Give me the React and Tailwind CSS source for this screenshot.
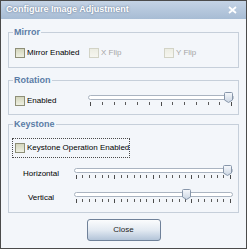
import React from 'react';

const font = { fontFamily: '"Liberation Sans", Arial, sans-serif' };

const CheckBox = ({ disabled }) => (
    <span
        className={
            disabled
                ? 'block w-[10px] h-[10px] shrink-0 border border-[#d2d3c6] bg-gradient-to-b from-[#ecede3] to-[#f6f6f0]'
                : 'block w-[10px] h-[10px] shrink-0 border border-[#8e8f78] bg-gradient-to-b from-[#d4d6bd] to-[#eef0e2]'
        }
    />
);

const CheckLabel = ({ text, disabled }) => (
    <div className="flex items-center gap-[2px] whitespace-nowrap">
        <CheckBox disabled={disabled} />
        <span className={disabled ? 'text-[8px] leading-[10px] text-[#a6a6a6]' : 'text-[8px] leading-[10px] text-black'}>
            {text}
        </span>
    </div>
);

const Thumb = () => (
    <svg width="9" height="11" viewBox="0 0 9 11" className="block">
        <defs>
            <linearGradient id="thumbFill" x1="0" y1="0" x2="0" y2="1">
                <stop offset="0" stopColor="#f7f9fc" />
                <stop offset="1" stopColor="#c9d4e2" />
            </linearGradient>
        </defs>
        <path d="M1.5 0.5h6a1 1 0 0 1 1 1v6.5l-4 2.5-4-2.5v-6.5a1 1 0 0 1 1-1z" fill="url(#thumbFill)" stroke="#8796aa" />
    </svg>
);

// track + thumb + tick row
const Slider = ({ className, value, ticks }) => {
    const list = Array.from({ length: ticks }, (_, i) => i);
    return (
        <div className={`flex flex-col ${className}`}>
            <div className="relative h-[5px] rounded-[3px] border border-[#aab4c1] bg-white">
                <div className="absolute top-[-4px]" style={{ left: `calc(${value}% - ${value * 0.09}px)` }}>
                    <Thumb />
                </div>
            </div>
            <div className="flex items-start justify-between px-[2px] mt-[2px]">
                {list.map(i => (
                    <span
                        key={i}
                        className={i % 6 === 0 || i === ticks - 1 ? 'block w-px h-[4px] bg-[#4a4a4a]' : 'block w-px h-[3px] bg-[#5a5a5a]'}
                    />
                ))}
            </div>
        </div>
    );
};

const Group = ({ title, children, className }) => (
    <fieldset className={`border border-[#c6cfda] ${className || ''}`}>
        <legend className="ml-[4px] px-[1px] text-[9px] leading-[10px] font-bold text-[#5b7ca6]">{title}</legend>
        {children}
    </fieldset>
);

export default function App() {
    return (
        <div style={font} className="w-[247px] h-[249px] flex flex-col border border-[#4b4b4b] bg-[#f3f6fa] overflow-hidden">
            {/* Title bar */}
            <div className="h-[18px] shrink-0 flex items-center justify-between pl-[5px] pr-[9px] bg-gradient-to-b from-[#c4d3e5] to-[#a7bcd4]">
                <span className="text-[9px] font-bold text-white [text-shadow:0_0_2px_rgba(60,80,110,0.8)]">
                    Configure Image Adjustment
                </span>
                <svg width="9" height="8" viewBox="0 0 9 8">
                    <path d="M1 1l7 6M8 1l-7 6" stroke="#ffffff" strokeWidth="1.8" />
                </svg>
            </div>

            <div className="flex flex-col px-[7px] pt-[8px]">
                <Group title="Mirror" className="pt-0 pb-[9px]">
                    <div className="flex items-center pl-[6px] pt-[11px]">
                        <div className="w-[74px]">
                            <CheckLabel text="Mirror Enabled" />
                        </div>
                        <div className="w-[75px]">
                            <CheckLabel text="X Flip" disabled />
                        </div>
                        <CheckLabel text="Y Flip" disabled />
                    </div>
                </Group>

                <Group title="Rotation" className="mt-[7px] pb-[8px]">
                    <div className="flex items-start pl-[6px] pr-[4px] pt-[10px]">
                        <div className="w-[73px] pt-[1px]">
                            <CheckLabel text="Enabled" />
                        </div>
                        <Slider className="w-[146px]" value={100} ticks={13} />
                    </div>
                </Group>

                <Group title="Keystone" className="mt-[4px] pb-[9px]">
                    <div className="flex flex-col pt-[9px]">
                        <div className="ml-[3px] w-[118px] h-[20px] flex items-center pl-[2px] border border-dotted border-[#4a4a4a]">
                            <CheckLabel text="Keystone Operation Enabled" />
                        </div>
                        <div className="flex items-center pl-[3px] pr-[4px] mt-[10px]">
                            <span className="w-[58px] text-center text-[8px] leading-[10px] text-black">Horizontal</span>
                            <div className="w-[4px]" />
                            <Slider className="w-[159px]" value={100} ticks={25} />
                        </div>
                        <div className="flex items-center pl-[3px] pr-[4px] mt-[13px]">
                            <span className="w-[58px] text-center text-[8px] leading-[10px] text-black">Vertical</span>
                            <div className="w-[4px]" />
                            <Slider className="w-[159px]" value={72} ticks={25} />
                        </div>
                    </div>
                </Group>

                <div className="flex justify-center mt-[6px]">
                    <button className="w-[74px] h-[22px] rounded-[3px] border border-[#6f8199] bg-gradient-to-b from-[#fbfcfd] via-[#e3eaf2] to-[#b3c4d8] text-[8px] text-[#1b1b1b]">
                        Close
                    </button>
                </div>
            </div>
        </div>
    );
}
